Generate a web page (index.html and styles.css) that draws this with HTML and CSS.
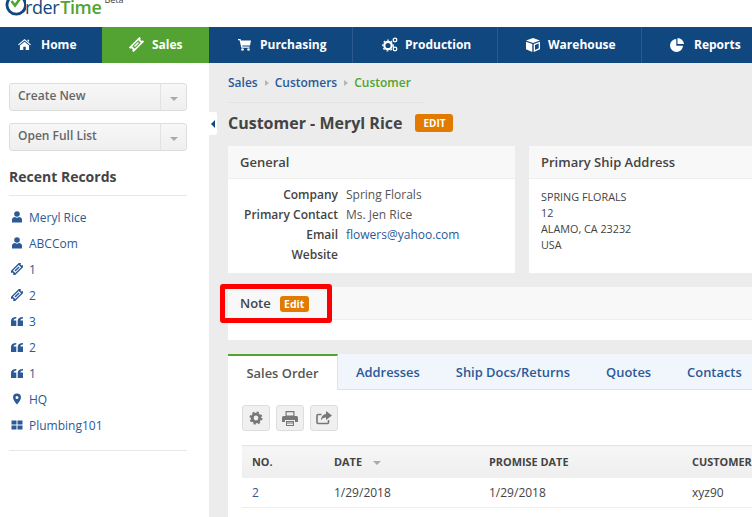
FILE: index.html
```html
<!DOCTYPE html>
<html lang="en">
<head>
<meta charset="utf-8">
<title>Order Time - Customer</title>
<link rel="stylesheet" href="styles.css">
</head>
<body>
<div class="page">
  <header class="top">
    <div class="logo">
      <svg class="logo-o" width="22" height="18" viewBox="0 0 22 18"><path d="M5.500-1.500A9.300 9.300 0 1 0 19-1.500" fill="none" stroke="#11477f" stroke-width="2.800"/><path d="M7.500 1l3.500 4.500L18-4" fill="none" stroke="#52a332" stroke-width="2.600"/></svg>
      <span class="logo-order">rder</span><span class="logo-time">Time</span><span class="logo-beta">Beta</span>
    </div>
  </header>
  <nav class="nav">
    <a class="nav-item w-home"><svg class="nav-ico" width="13" height="11" viewBox="0 0 14 12"><path d="M7 0l7 6-.8.9L7 1.700.8 6.900 0 6zM2 7.200L7 3l5 4.200V12H8.300V8.500H5.700V12H2zM10.200 .8H12v2.600l-1.800-1.500z" fill="#fff"/></svg>Home</a>
    <a class="nav-item active w-sales"><svg class="nav-ico" width="15" height="15" viewBox="0 0 16 16"><g transform="rotate(-45 8 8)"><path d="M0 4.500h16v2a1.500 1.500 0 0 0 0 3v2H0v-2a1.500 1.500 0 0 0 0-3zM3.500 6.200v3.600h9V6.200z" fill="#fff" fill-rule="evenodd"/><path d="M5 7.200h6v1.600H5z" fill="#fff"/></g></svg>Sales</a>
    <a class="nav-item w-purch"><svg class="nav-ico" width="13" height="13" viewBox="0 0 13 13"><path d="M0 1h2.500l.4 1.500H13l-1 5H4.200l.2 1H11.500v1.200H3.300L1.600 2.200H0z" fill="#fff"/><circle cx="4.500" cy="11.500" r="1.300" fill="#fff"/><circle cx="10.500" cy="11.500" r="1.300" fill="#fff"/></svg>Purchasing</a>
    <a class="nav-item w-prod"><svg class="nav-ico" width="16" height="15" viewBox="0 0 16 15"><circle cx="6" cy="8.500" r="3.700" fill="none" stroke="#fff" stroke-width="2.200"/><circle cx="6" cy="8.500" r="5.300" fill="none" stroke="#fff" stroke-width="1.200" stroke-dasharray="1.800 2.100"/><circle cx="13" cy="3" r="1.800" fill="none" stroke="#fff" stroke-width="1.300"/><circle cx="13" cy="12" r="1.800" fill="none" stroke="#fff" stroke-width="1.300"/></svg>Production</a>
    <a class="nav-item w-ware"><svg class="nav-ico" width="14" height="14" viewBox="0 0 14 14"><path d="M7 0l7 2.500L7 5 0 2.500zM0 3.800l6.300 2.300V14L0 11.200z" fill="#fff"/><path d="M7.700 6.100L14 3.800v7.400L7.700 14zM9 7v5l3.700-1.700V5.600z" fill="#fff" fill-rule="evenodd"/></svg>Warehouse</a>
    <a class="nav-item w-rep"><svg class="nav-ico" width="14" height="14" viewBox="0 0 14 14"><path d="M6.300 1v6.700H13A6.500 6.500 0 1 1 6.300 1z" fill="#fff"/><path d="M7.500 0A6.500 6.500 0 0 1 14 6H7.500z" fill="#fff"/></svg>Reports</a>
  </nav>
  <div class="body">
    <aside class="side">
      <div class="split"><span class="split-label">Create New</span><span class="split-caret"><i class="caret"></i></span></div>
      <div class="split"><span class="split-label">Open Full List</span><span class="split-caret"><i class="caret"></i></span></div>
      <h3 class="recent-title">Recent Records</h3>
      <ul class="recent">
        <li><svg class="ri" viewBox="0 0 12 12"><use href="#i-user"/></svg>Meryl Rice</li>
        <li><svg class="ri" viewBox="0 0 12 12"><use href="#i-user"/></svg>ABCCom</li>
        <li><svg class="ri" viewBox="0 0 12 12"><use href="#i-ticket"/></svg>1</li>
        <li><svg class="ri" viewBox="0 0 12 12"><use href="#i-ticket"/></svg>2</li>
        <li><svg class="ri" viewBox="0 0 12 12"><use href="#i-quote"/></svg>3</li>
        <li><svg class="ri" viewBox="0 0 12 12"><use href="#i-quote"/></svg>2</li>
        <li><svg class="ri" viewBox="0 0 12 12"><use href="#i-quote"/></svg>1</li>
        <li><svg class="ri" viewBox="0 0 12 12"><use href="#i-pin"/></svg>HQ</li>
        <li><svg class="ri" viewBox="0 0 12 12"><use href="#i-grid"/></svg>Plumbing101</li>
      </ul>
    </aside>
    <main class="main">
      <span class="collapse"><i class="collapse-arrow"></i></span>
      <div class="crumbs"><a>Sales</a><i class="sep"></i><a>Customers</a><i class="sep"></i><b>Customer</b></div>
      <div class="title-row"><h1 class="title">Customer - Meryl Rice</h1><span class="badge badge-lg">EDIT</span></div>
      <div class="cards">
        <section class="card card-gen">
          <h2 class="card-head">General</h2>
          <dl class="info">
            <dt>Company</dt><dd>Spring Florals</dd>
            <dt>Primary Contact</dt><dd>Ms. Jen Rice</dd>
            <dt>Email</dt><dd><a>flowers@yahoo.com</a></dd>
            <dt>Website</dt><dd></dd>
          </dl>
        </section>
        <section class="card card-ship">
          <h2 class="card-head">Primary Ship Address</h2>
          <div class="addr">SPRING FLORALS<br>12<br>ALAMO, CA 23232<br>USA</div>
        </section>
      </div>
      <section class="note">
        <h2 class="card-head note-head">Note<span class="badge badge-sm">Edit</span></h2>
        <div class="note-body"></div>
        <span class="mark"></span>
      </section>
      <section class="tabs-wrap">
        <div class="tabs">
          <a class="tab active">Sales Order</a><a class="tab t2">Addresses</a><a class="tab t3">Ship Docs/Returns</a><a class="tab t4">Quotes</a><a class="tab t5">Contacts</a>
        </div>
        <div class="panel">
          <div class="tools">
            <span class="tool"><svg width="14" height="14" viewBox="0 0 14 14"><circle cx="7" cy="7" r="3.800" fill="none" stroke="#777" stroke-width="2.800"/><circle cx="7" cy="7" r="5.500" fill="none" stroke="#777" stroke-width="2" stroke-dasharray="2.200 2.120"/></svg></span>
            <span class="tool"><svg width="16" height="15" viewBox="0 0 16 15"><path d="M3.500 0h9v5h-9zM0 6.500A1.500 1.500 0 0 1 1.500 5h13A1.500 1.500 0 0 1 16 6.500V11h-3V9H3v2H0zM4 10h8v5H4z" fill="#777"/><path d="M5 11.500h6v1H5zM5 13h6v1H5zM4.700 1.200h6.600v3.200H4.700z" fill="#eee"/></svg></span>
            <span class="tool"><svg width="16" height="14" viewBox="0 0 16 14"><path d="M10 0l6 4.500L10 9V6.500C7.500 6.500 6 7.500 5 9.500 5 6 7 3.300 10 3z" fill="#777"/><path d="M12.500 9v2.500a1 1 0 0 1-1 1H2a1 1 0 0 1-1-1V4.500a1 1 0 0 1 1-1h3.500" fill="none" stroke="#777" stroke-width="1.600"/></svg></span>
          </div>
          <table class="grid">
            <thead><tr><th class="c1">NO.</th><th class="c2">DATE<i class="sort"></i></th><th class="c3">PROMISE DATE</th><th class="c4">CUSTOMER PO</th></tr></thead>
            <tbody><tr><td><a>2</a></td><td>1/29/2018</td><td>1/29/2018</td><td>xyz90</td></tr></tbody>
          </table>
        </div>
      </section>
    </main>
  </div>
</div>
<svg class="defs" width="0" height="0">
  <symbol id="i-user" viewBox="0 0 12 12"><circle cx="6" cy="3" r="2.800" fill="#2b5a96"/><path d="M1 11.500V8.500C1 7 2.500 6 4 6c.6.500 1.200.8 2 .8S7.400 6.500 8 6c1.500 0 3 1 3 2.500v3z" fill="#2b5a96"/></symbol>
  <symbol id="i-ticket" viewBox="0 0 16 16"><g transform="rotate(-45 8 8)"><path d="M-1 4h18v2.500a1.500 1.500 0 0 0 0 3V12H-1V9.500a1.500 1.500 0 0 0 0-3zM2.500 5.800v4.400h11V5.800z" fill="#2b5a96" fill-rule="evenodd"/><path d="M4.200 7h7.600v2H4.200z" fill="#2b5a96"/></g></symbol>
  <symbol id="i-quote" viewBox="0 0 12 12"><path d="M5.300 2v1.500C3.500 3.500 2.700 4.300 2.700 5.500h2.600V11H0V6C0 3.500 2 2 5.300 2zM12 2v1.500c-1.800 0-2.600.8-2.600 2H12V11H6.700V6C6.700 3.500 8.700 2 12 2z" fill="#2b5a96"/></symbol>
  <symbol id="i-pin" viewBox="0 0 12 12"><path d="M6 .5A4 4 0 0 1 10 4.500C10 7 7.500 9.500 6 11.500 4.500 9.500 2 7 2 4.500A4 4 0 0 1 6 .5zM6 3a1.500 1.500 0 1 0 0 3 1.500 1.500 0 0 0 0-3z" fill="#2b5a96" fill-rule="evenodd"/></symbol>
  <symbol id="i-grid" viewBox="0 0 12 12"><path d="M.5 1.500h5v4h-5zM6.500 1.500h5v4h-5zM.5 6.500h5v4h-5zM6.500 6.500h5v4h-5z" fill="#2b5a96"/></symbol>
</svg>
</body>
</html>
```
FILE: styles.css
```css
* { box-sizing: border-box; }
html, body { margin: 0; padding: 0; }
body { font-family: "Open Sans", "Noto Sans", sans-serif; font-size: 12px; color: #444; background: #fff; }
a { color: #2b5a96; text-decoration: none; }
.defs { position: absolute; }
.page { width: 752px; height: 517px; overflow: hidden; display: flex; flex-direction: column; }

.top { height: 27px; flex: none; overflow: hidden; background: #fff; }
.logo { display: flex; align-items: flex-start; height: 27px; padding-left: 4px; }
.logo-o { flex: none; }
.logo-order { font-size: 18px; line-height: 20px; margin-top: -3px; margin-left: -1px; color: #11477f; letter-spacing: -.4px; }
.logo-time { font-size: 18px; line-height: 20px; margin-top: -3px; margin-left: 1px; color: #52a332; font-weight: 600; letter-spacing: -.4px; }
.logo-beta { font-size: 9px; line-height: 10px; margin-top: -5px; margin-left: 3px; color: #444; }

.nav { height: 36px; flex: none; display: flex; background: #11477f; }
.nav-item { display: flex; align-items: center; justify-content: flex-start; height: 36px; flex: none; color: #fff; font-size: 12px; font-weight: 700; padding-bottom: 1px; border-right: 1px solid #2a5a8e; }
.nav-item.active { background: #52a332; border-right: 0; }
.nav-ico { flex: none; }
.w-home { width: 102px; border-right: 0; padding-left: 18px; gap: 10px; }
.w-sales { width: 107px; padding-left: 27px; gap: 8px; }
.w-purch { width: 144px; padding-left: 29px; gap: 9px; }
.w-prod { width: 145px; padding-left: 29px; gap: 7px; }
.w-ware { width: 144px; padding-left: 28px; gap: 8px; }
.w-rep { width: 110px; border-right: 0; padding-left: 28px; gap: 10px; }

.body { flex: 1; display: flex; min-height: 0; }
.side { width: 209px; flex: none; padding: 20px 22px 0 9px; }
.split { display: flex; height: 28px; margin-bottom: 12px; background: linear-gradient(#f7f7f7, #efefef); border: 1px solid #ddd; border-radius: 3px; width: 178px; }
.split-label { flex: 1; padding-left: 8px; line-height: 24px; color: #666; font-size: 12px; font-weight: 600; }
.split-caret { width: 26px; flex: none; border-left: 1px solid #e2e2e2; display: flex; align-items: center; justify-content: center; padding-top: 3px; }
.caret { width: 0; height: 0; border: 4px solid transparent; border-top: 4px solid #aaa; border-bottom: 0; }
.recent-title { margin: 16px 0 0; padding-bottom: 9px; width: 178px; font-size: 14px; line-height: 19px; font-weight: 700; color: #444; border-bottom: 1px solid #e8e8e8; }
.recent { list-style: none; margin: 8px 0 0; padding: 0 0 12px 2px; width: 178px; border-bottom: 1px solid #e8e8e8; }
.recent li { display: flex; align-items: center; gap: 6px; height: 26px; font-size: 12px; color: #2b5a96; }
.ri { width: 12px; height: 12px; flex: none; }

.main { flex: 1; min-width: 0; background: #ececec; padding: 0 0 0 19px; position: relative; overflow: hidden; }
.collapse { position: absolute; left: 0; top: 49px; width: 8px; height: 23px; background: #fff; border-radius: 0 2px 2px 0; display: flex; align-items: center; justify-content: center; }
.collapse-arrow { width: 0; height: 0; border: 4px solid transparent; border-right: 4px solid #11477f; border-left: 0; }
.crumbs { display: flex; align-items: center; width: 197px; height: 40px; border-bottom: 1px solid #e3e3e3; font-size: 12px; color: #2b5a96; font-weight: 600; }
.crumbs a { font-weight: 600; }
.crumbs b { color: #52a332; font-weight: 600; }
.sep { width: 0; height: 0; margin: 1px 6px 0 7px; border: 3.500px solid transparent; border-left: 4px solid #b5b5b5; border-right: 0; }
.title-row { display: flex; align-items: center; height: 40px; gap: 13px; }
.title { margin: 0; font-size: 16px; font-weight: 700; color: #444; line-height: 20px; }
.badge { background: #e27a00; color: #fff; border-radius: 3px; font-weight: 700; display: inline-block; text-align: center; }
.badge-lg { width: 38px; height: 18px; font-size: 10px; line-height: 18px; }
.badge-sm { width: 29px; height: 16px; font-size: 10.500px; line-height: 16px; margin-left: 9px; margin-top: 1px; }

.cards { display: flex; gap: 14px; margin-top: 3px; }
.card { background: #fff; flex: none; height: 127px; }
.card-gen { width: 287px; }
.card-ship { width: 300px; }
.card-head { margin: 0; height: 33px; line-height: 32px; padding-left: 12px; font-size: 13px; font-weight: 600; color: #444; background: #f8f8f8; border-bottom: 1px solid #eee; }
.info { margin: 6px 0 0; display: grid; grid-template-columns: 110px 1fr; column-gap: 8px; font-size: 12px; line-height: 20px; }
.info dt { text-align: right; font-weight: 600; color: #444; }
.info dd { margin: 0; min-height: 20px; color: #555; }
.addr { padding: 10px 12px; font-size: 10.800px; line-height: 16px; color: #444; }

.note { position: relative; margin-top: 14px; width: 540px; height: 53px; background: #fff; }
.note-head { display: flex; align-items: center; }
.note-body { height: 20px; }
.mark { position: absolute; left: -8px; top: -3px; width: 112px; height: 39px; border: 5px solid #f00; border-radius: 3px; }

.tabs-wrap { margin-top: 14px; width: 540px; background: #fff; }
.tabs { display: flex; height: 36px; background: #f1f5fc; border-bottom: 1px solid #dde3ea; }
.tab { display: block; font-size: 12.900px; font-weight: 600; line-height: 37px; padding: 0; color: #2b5a96; flex: none; }
.tab.active { width: 110px; height: 36px; background: #fff; color: #555; text-align: center; border-top: 2px solid #52a332; border-right: 1px solid #dde3ea; line-height: 35px; }
.t2 { margin-left: 18px; }
.t3 { margin-left: 36px; }
.t4 { margin-left: 36px; }
.t5 { margin-left: 36px; }
.panel { padding: 15px 0 0 14px; height: 127px; }
.tools { display: flex; gap: 6px; height: 26px; }
.tool { width: 28px; height: 26px; background: #f0f0f0; border: 1px solid #ddd; border-radius: 3px; display: flex; align-items: center; justify-content: center; }
.grid { margin-top: 14px; border-collapse: collapse; table-layout: fixed; width: 560px; font-size: 12px; }
.grid th { height: 32px; padding: 0 0 0 10px; text-align: left; font-size: 10.900px; font-weight: 700; color: #444; background: linear-gradient(#f6f6f6, #eee); border-top: 1px solid #e6e6e6; white-space: nowrap; }
.grid td { height: 30px; padding: 0 0 0 10px; border-bottom: 1px solid #eee; color: #444; }
.c1 { width: 82px; }
.c2 { width: 155px; }
.c3 { width: 203px; }
.sort { display: inline-block; width: 0; height: 0; margin-left: 11px; vertical-align: middle; border: 4px solid transparent; border-top: 4px solid #aaa; border-bottom: 0; }
```
